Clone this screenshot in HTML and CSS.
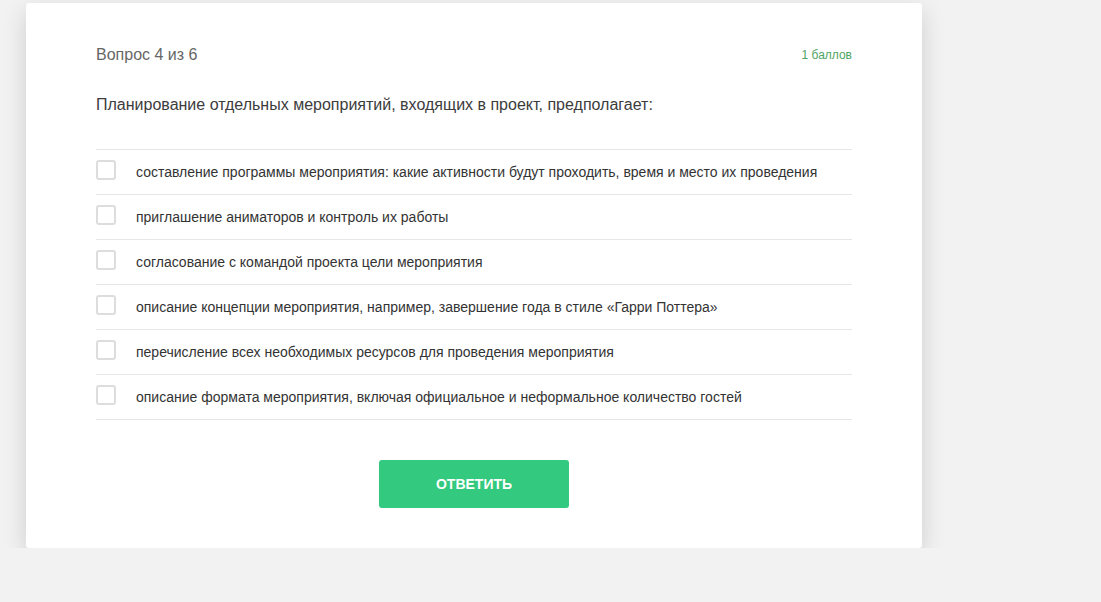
FILE: index.html
```html
<!DOCTYPE html>
<html lang="ru">
<head>
    <meta charset="UTF-8">
    <meta name="viewport" content="width=device-width, initial-scale=1.0">
    <title>Тест</title>
    <link rel="stylesheet" href="styles.css">
</head>
<body>

    <!-- Карточка вопроса -->
    <div class="quiz-card">
        <div class="quiz-head">
            <span class="quiz-counter">Вопрос 4 из 6</span>
            <span class="quiz-score">1 баллов</span>
        </div>

        <p class="quiz-question">Планирование отдельных мероприятий, входящих в проект, предполагает:</p>

        <ul class="answer-list">
            <li class="answer"><span class="check"></span>составление программы мероприятия: какие активности будут проходить, время и место их проведения</li>
            <li class="answer"><span class="check"></span>приглашение аниматоров и контроль их работы</li>
            <li class="answer"><span class="check"></span>согласование с командой проекта цели мероприятия</li>
            <li class="answer"><span class="check"></span>описание концепции мероприятия, например, завершение года в стиле «Гарри Поттера»</li>
            <li class="answer"><span class="check"></span>перечисление всех необходимых ресурсов для проведения мероприятия</li>
            <li class="answer"><span class="check"></span>описание формата мероприятия, включая официальное и неформальное количество гостей</li>
        </ul>

        <div class="actions">
            <button class="submit-btn">Ответить</button>
        </div>
    </div>

</body>
</html>
```

FILE: styles.css
```css
body {
    margin: 0;
    background: #f2f2f2;
    font-family: "Liberation Sans", Arial, sans-serif;
    color: #333;
}
.quiz-card {
    margin: 3px 0 0 26px;
    width: 896px;
    box-sizing: border-box;
    padding: 42px 70px 40px;
    background: #fff;
    border-radius: 3px;
    box-shadow: 0 8px 24px rgba(0, 0, 0, 0.15);
}
.quiz-head {
    display: flex;
    justify-content: space-between;
    align-items: center;
    height: 20px;
}
.quiz-counter {
    font-size: 16px;
    color: #666;
}
.quiz-score {
    font-size: 12px;
    color: #4fa463;
}
.quiz-question {
    margin: 30px 0 34px;
    font-size: 16px;
    line-height: 20px;
    color: #3c3c3c;
}
.answer-list {
    list-style: none;
    margin: 0;
    padding: 0;
    border-top: 1px solid #e6e6e6;
}
.answer {
    display: flex;
    align-items: center;
    height: 44px;
    border-bottom: 1px solid #e6e6e6;
    font-size: 14px;
    color: #333;
}
.check {
    width: 16px;
    height: 16px;
    border: 2px solid #ddd;
    border-radius: 3px;
    margin: -5px 20px 0 0;
    flex-shrink: 0;
}
.actions {
    display: flex;
    justify-content: center;
    margin-top: 40px;
}
.submit-btn {
    width: 190px;
    height: 48px;
    border: none;
    border-radius: 3px;
    background: #33c97e;
    color: #fff;
    font-family: "Liberation Sans", Arial, sans-serif;
    font-weight: bold;
    font-size: 14px;
    text-transform: uppercase;
}
```
